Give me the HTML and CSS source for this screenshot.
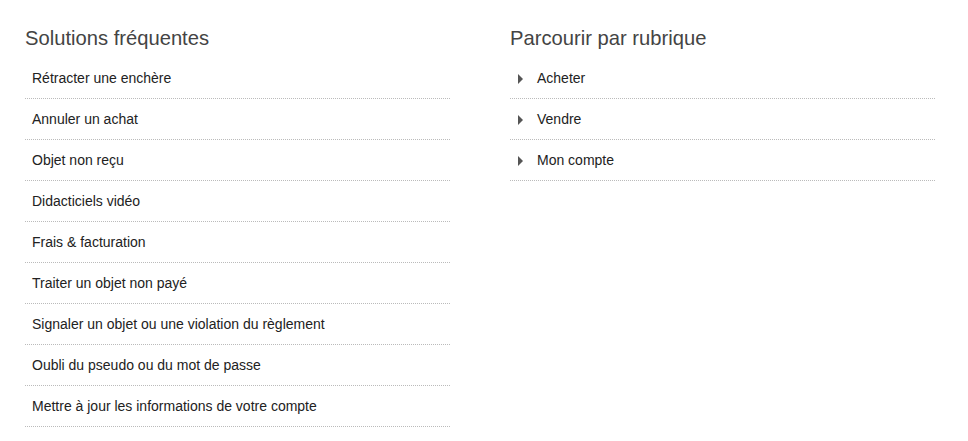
FILE: index.html
```html
<!DOCTYPE html>
<html lang="fr">
<head>
    <meta charset="UTF-8">
    <meta name="viewport" content="width=device-width, initial-scale=1.0">
    <title>Aide</title>
    <link rel="stylesheet" href="styles.css">
</head>
<body>
    <div class="help-columns">
        <section class="help-block">
            <h2>Solutions fréquentes</h2>
            <ul class="link-list">
                <li><a href="#">Rétracter une enchère</a></li>
                <li><a href="#">Annuler un achat</a></li>
                <li><a href="#">Objet non reçu</a></li>
                <li><a href="#">Didacticiels vidéo</a></li>
                <li><a href="#">Frais &amp; facturation</a></li>
                <li><a href="#">Traiter un objet non payé</a></li>
                <li><a href="#">Signaler un objet ou une violation du règlement</a></li>
                <li><a href="#">Oubli du pseudo ou du mot de passe</a></li>
                <li><a href="#">Mettre à jour les informations de votre compte</a></li>
            </ul>
        </section>

        <section class="help-block">
            <h2>Parcourir par rubrique</h2>
            <ul class="link-list topics">
                <li><a href="#"><span class="arrow"></span>Acheter</a></li>
                <li><a href="#"><span class="arrow"></span>Vendre</a></li>
                <li><a href="#"><span class="arrow"></span>Mon compte</a></li>
            </ul>
        </section>
    </div>
</body>
</html>
```

FILE: styles.css
```css
:root {
    --heading-color: #444;
    --text-color: #222;
    --rule-color: #bbb;
}

* {
    margin: 0;
    padding: 0;
    box-sizing: border-box;
}

body {
    background: #fff;
    font-family: 'Liberation Sans', Arial, Helvetica, sans-serif;
    color: var(--text-color);
}

.help-columns {
    display: grid;
    grid-template-columns: 425px 425px;
    column-gap: 60px;
    padding: 25px 0 0 25px;
}

.help-block h2 {
    font-size: 20.2px;
    font-weight: normal;
    line-height: 26px;
    color: var(--heading-color);
    margin-bottom: 7px;
}

.link-list {
    list-style: none;
}

.link-list li {
    border-bottom: 1px dotted var(--rule-color);
}

.link-list a {
    display: flex;
    align-items: center;
    height: 40px;
    padding-left: 7px;
    font-size: 14px;
    color: var(--text-color);
    text-decoration: none;
}

.link-list a:hover {
    text-decoration: underline;
}

.topics a {
    padding-left: 8px;
}

.arrow {
    width: 0;
    height: 0;
    border-top: 5px solid transparent;
    border-bottom: 5px solid transparent;
    border-left: 5px solid #555;
    margin-right: 14px;
    margin-top: 1px;
}
```
